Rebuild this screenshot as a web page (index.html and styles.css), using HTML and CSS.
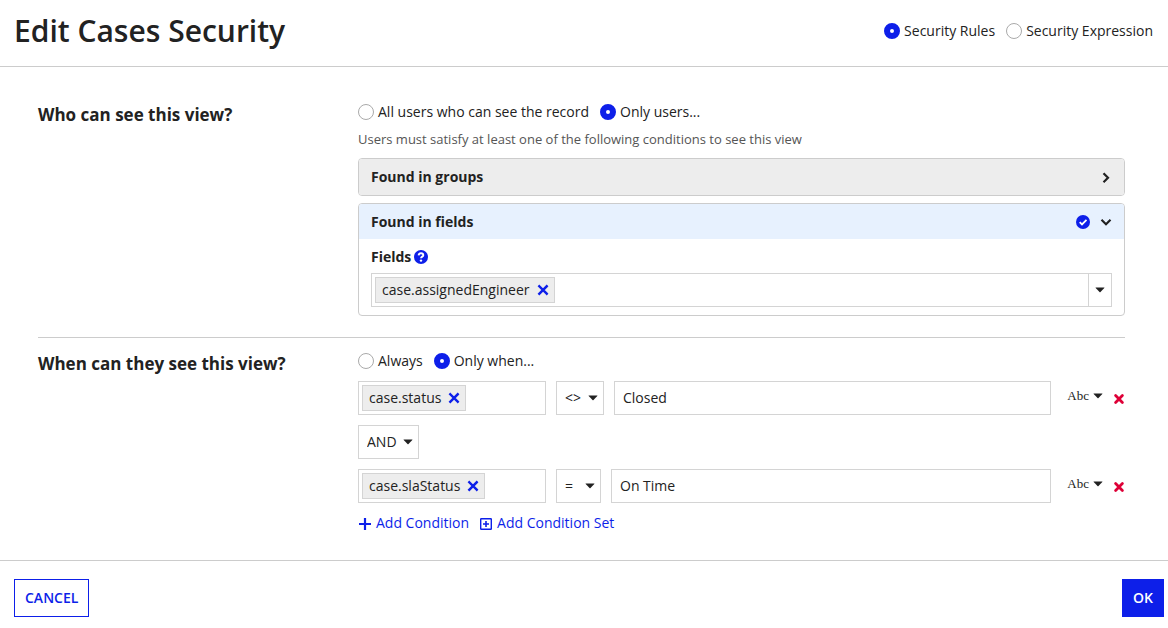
FILE: index.html
```html
<!DOCTYPE html>
<html lang="en">
<head>
<meta charset="utf-8">
<meta name="viewport" content="width=device-width, initial-scale=1">
<title>Edit Cases Security</title>
<link rel="stylesheet" href="styles.css">
</head>
<body>
<svg class="sprite" aria-hidden="true">
  <symbol id="caret" viewBox="0 0 10 6"><path d="M.8.6h8.400q.5 0 .1.5L5.500 5q-.5.5-1 0L.7 1.100Q.3.6.8.6z" fill="currentColor"/></symbol>
  <symbol id="cross" viewBox="0 0 12 12"><path d="M2.300 2.300l7.400 7.400M9.700 2.300l-7.400 7.400" fill="none" stroke="currentColor" stroke-width="2.400" stroke-linecap="square"/></symbol>
  <symbol id="remove" viewBox="0 0 12 12"><path d="M2.600 2.600l6.800 6.800M9.400 2.600L2.600 9.400" fill="none" stroke="currentColor" stroke-width="2.800" stroke-linecap="round"/></symbol>
</svg>
<form class="dialog">
  <header class="header">
    <h1 class="title">Edit Cases Security</h1>
    <div class="radios" role="radiogroup" aria-label="Security mode">
      <label class="radio"><input type="radio" name="mode" checked>Security Rules</label>
      <label class="radio"><input type="radio" name="mode">Security Expression</label>
    </div>
  </header>

  <main class="content">
    <section class="section">
      <h2 class="question">Who can see this view?</h2>
      <div class="answer">
        <div class="radios" role="radiogroup" aria-label="Who can see this view?">
          <label class="radio"><input type="radio" name="who">All users who can see the record</label>
          <label class="radio"><input type="radio" name="who" checked>Only users...</label>
        </div>
        <p class="hint">Users must satisfy at least one of the following conditions to see this view</p>
        <div class="panel">
          <button type="button" class="panel-head" aria-expanded="false">
            <span>Found in groups</span>
            <svg class="chevron" viewBox="0 0 12 12"><path d="M3.500 2.200L8 6.700l-4.500 4.500" fill="none" stroke="currentColor" stroke-width="2.200"/></svg>
          </button>
        </div>
        <div class="panel">
          <button type="button" class="panel-head panel-head-open" aria-expanded="true">
            <span>Found in fields</span>
            <span class="panel-icons">
              <svg class="badge" viewBox="0 0 14 14"><circle cx="7" cy="7" r="7" fill="currentColor"/><path d="M3.700 7.200L6 9.500l4.500-4.600" fill="none" stroke="#fff" stroke-width="1.800"/></svg>
              <svg class="chevron" viewBox="0 0 12 12"><path d="M1.500 3.800L6 8.200l4.500-4.400" fill="none" stroke="currentColor" stroke-width="2.200"/></svg>
            </span>
          </button>
          <div class="panel-body">
            <div class="field-label">
              <label for="fields">Fields</label>
              <svg class="badge" viewBox="0 0 14 14"><circle cx="7" cy="7" r="7" fill="currentColor"/><path d="M4.600 5.300C4.800 3.800 5.800 3.200 7 3.200c1.300 0 2.300.8 2.300 2C9.300 6.700 7 6.600 7 8.300" fill="none" stroke="#fff" stroke-width="1.900"/><circle cx="7" cy="10.600" r="1.200" fill="#fff"/></svg>
            </div>
            <div class="picker">
              <span class="token">case.assignedEngineer<button type="button" class="icon-button" aria-label="Remove case.assignedEngineer"><svg class="cross"><use href="#cross"/></svg></button></span>
              <input class="picker-input" id="fields" type="text">
              <button type="button" class="picker-toggle" aria-label="Show fields"><svg class="caret"><use href="#caret"/></svg></button>
            </div>
          </div>
        </div>
      </div>
    </section>

    <section class="section section-divided">
      <h2 class="question">When can they see this view?</h2>
      <div class="answer">
        <div class="radios" role="radiogroup" aria-label="When can they see this view?">
          <label class="radio"><input type="radio" name="when">Always</label>
          <label class="radio"><input type="radio" name="when" checked>Only when...</label>
        </div>
        <div class="conditions">
          <div class="condition">
            <div class="picker picker-small">
              <span class="token">case.status<button type="button" class="icon-button" aria-label="Remove case.status"><svg class="cross"><use href="#cross"/></svg></button></span>
              <input class="picker-input" type="text" aria-label="First condition field">
            </div>
            <span class="drop"><select aria-label="First operator"><option>&lt;&gt;</option></select><svg class="caret"><use href="#caret"/></svg></span>
            <input class="value" type="text" value="Closed" aria-label="First value">
            <div class="actions">
              <button type="button" class="type-button" aria-label="First value type">Abc<svg class="caret"><use href="#caret"/></svg></button>
              <button type="button" class="icon-button danger" aria-label="Delete first condition"><svg class="cross"><use href="#remove"/></svg></button>
            </div>
          </div>
          <div class="condition">
            <span class="drop"><select aria-label="Combine with"><option>AND</option></select><svg class="caret"><use href="#caret"/></svg></span>
          </div>
          <div class="condition">
            <div class="picker picker-small">
              <span class="token">case.slaStatus<button type="button" class="icon-button" aria-label="Remove case.slaStatus"><svg class="cross"><use href="#cross"/></svg></button></span>
              <input class="picker-input" type="text" aria-label="Second condition field">
            </div>
            <span class="drop"><select aria-label="Second operator"><option>=</option></select><svg class="caret"><use href="#caret"/></svg></span>
            <input class="value" type="text" value="On Time" aria-label="Second value">
            <div class="actions">
              <button type="button" class="type-button" aria-label="Second value type">Abc<svg class="caret"><use href="#caret"/></svg></button>
              <button type="button" class="icon-button danger" aria-label="Delete second condition"><svg class="cross"><use href="#remove"/></svg></button>
            </div>
          </div>
        </div>
        <div class="links">
          <a class="link" href="#"><svg class="link-icon" viewBox="0 0 14 14"><path d="M7 2v12M1 8h12" fill="none" stroke="currentColor" stroke-width="2.200"/></svg>Add Condition</a>
          <a class="link" href="#"><svg class="link-icon" viewBox="0 0 14 14"><path d="M7 5v6M4 8h6" fill="none" stroke="currentColor" stroke-width="1.600"/><rect x="1.700" y="2.700" width="10.600" height="10.600" rx=".5" fill="none" stroke="currentColor" stroke-width="1.400"/></svg>Add Condition Set</a>
        </div>
      </div>
    </section>
  </main>

  <footer class="footer">
    <button type="button" class="button">CANCEL</button>
    <button type="submit" class="button button-primary">OK</button>
  </footer>
</form>
</body>
</html>
```
FILE: styles.css
```css
:root {
  --blue: #0d1fe9;
  --line: #ccc;
  --ink: #222;
}

* {
  box-sizing: border-box;
}

body {
  margin: 0;
  background: #fff;
  color: var(--ink);
  font: 14px/20px "Open Sans", "Noto Sans", sans-serif;
}

button,
input,
select {
  margin: 0;
  color: inherit;
  font: inherit;
}

svg {
  display: block;
  flex: none;
}

.sprite {
  position: absolute;
  width: 0;
  height: 0;
}

.header {
  display: flex;
  align-items: center;
  justify-content: space-between;
  padding: 11px 15px 15px 14px;
  border-bottom: 1px solid var(--line);
}

.title {
  margin: 0;
  font-size: 30px;
  font-weight: 600;
  line-height: 40px;
}

.radios {
  display: flex;
  flex-wrap: wrap;
  gap: 11px;
}

.radio {
  display: flex;
  align-items: center;
  gap: 4px;
}

.radio input {
  appearance: none;
  width: 16px;
  height: 16px;
  border: 1px solid #aaa;
  border-radius: 50%;
  background: #fff;
}

.radio input:checked {
  border: 6px solid var(--blue);
}

.content {
  padding: 35px 43px 27px 38px;
}

.section {
  display: grid;
  grid-template-columns: 320px minmax(0, 1fr);
}

.section-divided {
  margin-top: 21px;
  padding-top: 13px;
  border-top: 1px solid var(--line);
}

.question {
  margin: 0;
  font-size: 17px;
  font-weight: 700;
  line-height: 26px;
}

.hint {
  margin: 7px 0 9px;
  color: #555;
  font-size: 13px;
}

.panel {
  overflow: hidden;
  border: 1px solid var(--line);
  border-radius: 4px;
}

.panel + .panel {
  margin-top: 7px;
}

.panel-head {
  display: flex;
  align-items: center;
  justify-content: space-between;
  width: 100%;
  padding: 8px 12px;
  border: 0;
  background: #ededed;
  font-weight: 700;
  text-align: left;
}

.panel-head-open {
  padding: 8px 12px 7px;
  background: #e7f1fe;
}

.panel-icons {
  display: flex;
  align-items: center;
  gap: 10px;
}

.chevron {
  width: 12px;
  height: 12px;
}

.badge {
  width: 14px;
  height: 14px;
  color: var(--blue);
}

.panel-body {
  padding: 8px 12px;
}

.field-label {
  display: flex;
  align-items: center;
  gap: 3px;
  margin-bottom: 6px;
  font-weight: 700;
}

.picker {
  display: flex;
  align-items: center;
  height: 34px;
  padding-left: 3px;
  border: 1px solid #d4d4d4;
}

.picker-small {
  flex: none;
  width: 188px;
}

.token {
  display: flex;
  align-items: center;
  gap: 7px;
  height: 26px;
  padding: 0 5px 0 6px;
  border: 1px solid #d4d4d4;
  background: #ededed;
}

.icon-button {
  padding: 0;
  border: 0;
  background: none;
  color: var(--blue);
}

.cross {
  width: 12px;
  height: 12px;
}

.caret {
  width: 10px;
  height: 6px;
}

.picker-input {
  flex: 1;
  min-width: 0;
  border: 0;
  background: none;
}

.picker-toggle {
  display: grid;
  place-items: center;
  align-self: stretch;
  width: 23px;
  padding: 0;
  border: 0;
  border-left: 1px solid #d4d4d4;
  background: none;
}

.conditions {
  display: grid;
  gap: 10px;
  margin: 10px 0;
}

.condition {
  display: flex;
  align-items: center;
  gap: 10px;
}

.drop {
  position: relative;
  flex: none;
}

.drop select {
  display: block;
  appearance: none;
  min-width: 45px;
  height: 34px;
  padding: 0 21px 0 8px;
  border: 1px solid #d4d4d4;
  border-radius: 0;
  background: #fff;
}

.drop .caret {
  position: absolute;
  top: 14px;
  right: 6px;
  pointer-events: none;
}

.value {
  flex: 1;
  min-width: 0;
  height: 34px;
  padding: 0 8px 2px;
  border: 1px solid #d4d4d4;
}

.actions {
  display: flex;
  align-items: center;
  gap: 10px;
  padding-left: 6px;
}

.type-button {
  display: flex;
  align-items: center;
  gap: 4px;
  padding: 0 0 4px;
  border: 0;
  background: none;
  font: 13px/20px "Liberation Serif", serif;
}

.danger {
  padding-top: 2px;
  color: #de0037;
}

.links {
  display: flex;
  gap: 10px;
}

.link {
  display: flex;
  align-items: center;
  gap: 4px;
  color: var(--blue);
  text-decoration: none;
}

.link-icon {
  width: 14px;
  height: 14px;
}

.footer {
  display: flex;
  justify-content: space-between;
  padding: 18px 4px 11px 14px;
  border-top: 1px solid var(--line);
}

.button {
  height: 38px;
  padding: 0 10px;
  border: 1px solid var(--blue);
  background: #fff;
  color: var(--blue);
  font-weight: 600;
}

.button-primary {
  background: var(--blue);
  color: #fff;
}
```
